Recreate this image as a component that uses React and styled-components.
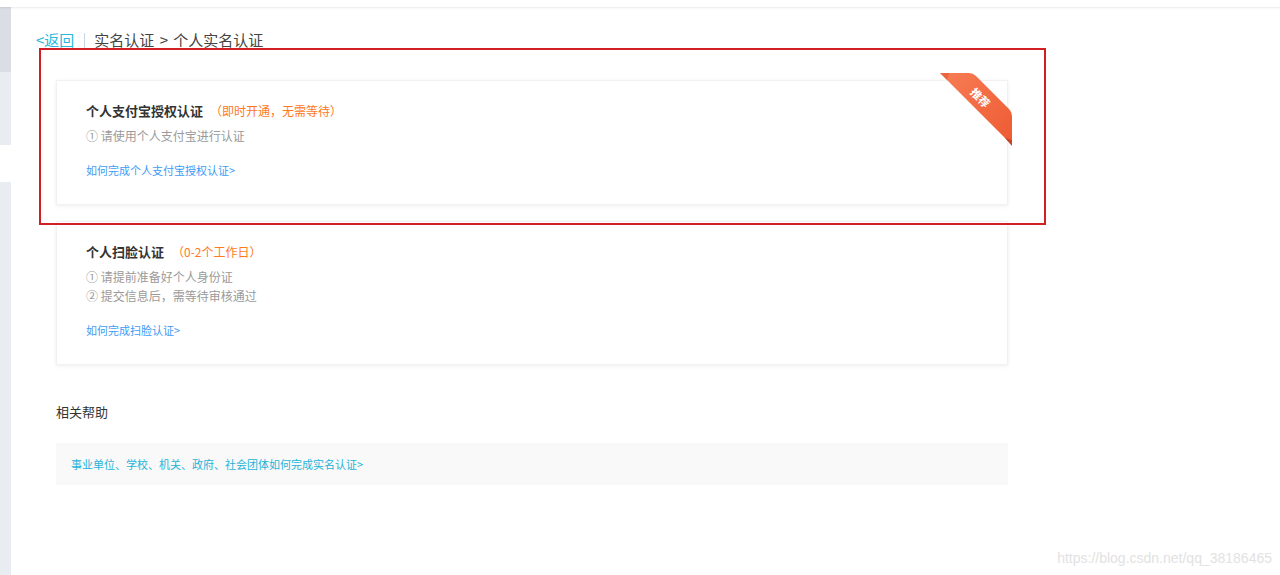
import React from "react";
import styled, { createGlobalStyle } from "styled-components";

const Global = createGlobalStyle`
  html, body { margin: 0; padding: 0; background: #fff; }
  body { font-family: "Noto Sans CJK SC", "Noto Sans", sans-serif; color: #333; }
  * { box-sizing: border-box; }
`;

const Page = styled.div`
  width: 1280px;
  height: 575px;
  display: flex;
  flex-direction: column;
  overflow: hidden;
  position: relative;
`;

const TopBar = styled.div`
  height: 7px;
  flex: none;
  background: #fff;
  box-shadow: 0 1px 2px rgba(0, 0, 0, 0.09);
  position: relative;
  z-index: 1;
`;

const Body = styled.div`
  flex: 1;
  display: flex;
`;

const Sidebar = styled.div`
  width: 11px;
  flex: none;
  display: flex;
  flex-direction: column;
`;

const SideItem = styled.div`
  height: ${(p) => p.$h}px;
  flex: ${(p) => (p.$grow ? 1 : "none")};
  background: ${(p) => p.$bg};
`;

const Main = styled.div`
  flex: 1;
  position: relative;
  padding-top: 23px;
`;

const Crumbs = styled.div`
  margin-left: 25px;
  display: flex;
  align-items: center;
  height: 20px;
  font-size: 15px;
  line-height: 20px;
  color: #444;
`;

const Back = styled.a`
  color: #2ab6dc;
  text-decoration: none;
`;

const Sep = styled.span`
  display: inline-block;
  width: 1px;
  height: 15px;
  background: #c6d6e6;
  margin: 0 9px 0 10px;
`;

const Current = styled.span`
  word-spacing: 2px;
`;

const Content = styled.div`
  margin-left: 45px;
  width: 952px;
  margin-top: 30px;
  display: flex;
  flex-direction: column;
  gap: 16px;
`;

const Card = styled.div`
  position: relative;
  background: #fff;
  border: 1px solid #f1f1f1;
  box-shadow: 0 1px 4px rgba(0, 0, 0, 0.07);
  height: ${(p) => p.$h}px;
  padding: ${(p) => p.$pt}px 29px 0;
`;

const TitleRow = styled.div`
  display: flex;
  align-items: center;
  height: 18px;
`;

const Title = styled.span`
  font-size: 13px;
  font-weight: 700;
  color: #333;
`;

const Note = styled.span`
  font-size: 12px;
  color: #ff7a1e;
  margin-left: ${(p) => p.$ml}px;
`;

const Steps = styled.div`
  margin-top: 7px;
  display: flex;
  flex-direction: column;
`;

const Step = styled.div`
  font-size: 12px;
  line-height: 19px;
  color: #9a9a9a;
`;

const HowLink = styled.a`
  display: block;
  margin-top: 16px;
  font-size: 11px;
  line-height: 18px;
  color: #3d9bf5;
  text-decoration: none;
`;

const Ribbon = styled.svg`
  position: absolute;
  top: -11px;
  right: -10px;
  overflow: visible;
`;

const HelpSection = styled.div`
  margin-left: 45px;
  width: 952px;
  margin-top: 38px;
  display: flex;
  flex-direction: column;
`;

const HelpTitle = styled.div`
  font-size: 13px;
  line-height: 18px;
  color: #333;
`;

const HelpBox = styled.div`
  margin-top: 22px;
  height: 42px;
  background: #f9f9f9;
  display: flex;
  align-items: center;
  padding-left: 15px;
`;

const HelpLink = styled.a`
  font-size: 11px;
  color: #1fb4d8;
  text-decoration: none;
`;

const Annotation = styled.div`
  position: absolute;
  left: 28px;
  top: 41px;
  width: 1007px;
  height: 177px;
  border: 2px solid #d21f24;
  pointer-events: none;
`;

const Watermark = styled.div`
  position: absolute;
  right: 8px;
  bottom: 9px;
  font-family: "Liberation Sans", Arial, sans-serif;
  font-size: 14px;
  color: #e2e2e2;
`;

function CornerRibbon() {
  return (
    <Ribbon width="80" height="80" viewBox="0 0 80 80">
      <defs>
        <linearGradient id="rb" x1="0" y1="0" x2="1" y2="1">
          <stop offset="0" stopColor="#f77d55" />
          <stop offset="1" stopColor="#ee5a32" />
        </linearGradient>
      </defs>
      <path
        d="M3 3 L32 3 Q36 3 39 6 L72 39 Q75 42 75 46 L75 75 Z"
        fill="url(#rb)"
      />
      <polygon points="68,68 75,70 75,76" fill="#c44627" />
      <polygon points="3,3 12,3 10,10" fill="#e0542f" opacity="0.55" />
      <text
        x="43"
        y="32"
        fill="#fff"
        fontSize="11"
        fontWeight="700"
        textAnchor="middle"
        transform="rotate(45 43 28)"
        fontFamily="Noto Sans CJK SC, sans-serif"
      >
        推荐
      </text>
    </Ribbon>
  );
}

export default function App() {
  return (
    <Page>
      <Global />
      <TopBar />
      <Body>
        <Sidebar>
          <SideItem $h={65} $bg="#dadee4" />
          <SideItem $h={73} $bg="#e9ecf0" />
          <SideItem $h={37} $bg="#ffffff" />
          <SideItem $grow $bg="#e9ecf0" />
        </Sidebar>
        <Main>
          <Crumbs>
            <Back href="#">&lt;返回</Back>
            <Sep />
            <Current>实名认证 &gt; 个人实名认证</Current>
          </Crumbs>
          <Content>
            <Card $h={125} $pt={20}>
              <CornerRibbon />
              <TitleRow>
                <Title>个人支付宝授权认证</Title>
                <Note $ml={7}>（即时开通，无需等待）</Note>
              </TitleRow>
              <Steps>
                <Step>① 请使用个人支付宝进行认证</Step>
              </Steps>
              <HowLink href="#">如何完成个人支付宝授权认证&gt;</HowLink>
            </Card>
            <Card $h={144} $pt={20}>
              <TitleRow>
                <Title>个人扫脸认证</Title>
                <Note $ml={8}>（0-2个工作日）</Note>
              </TitleRow>
              <Steps>
                <Step>① 请提前准备好个人身份证</Step>
                <Step>② 提交信息后，需等待审核通过</Step>
              </Steps>
              <HowLink href="#">如何完成扫脸认证&gt;</HowLink>
            </Card>
          </Content>
          <HelpSection>
            <HelpTitle>相关帮助</HelpTitle>
            <HelpBox>
              <HelpLink href="#">事业单位、学校、机关、政府、社会团体如何完成实名认证&gt;</HelpLink>
            </HelpBox>
          </HelpSection>
          <Annotation />
        </Main>
      </Body>
      <Watermark>https://blog.csdn.net/qq_38186465</Watermark>
    </Page>
  );
}
